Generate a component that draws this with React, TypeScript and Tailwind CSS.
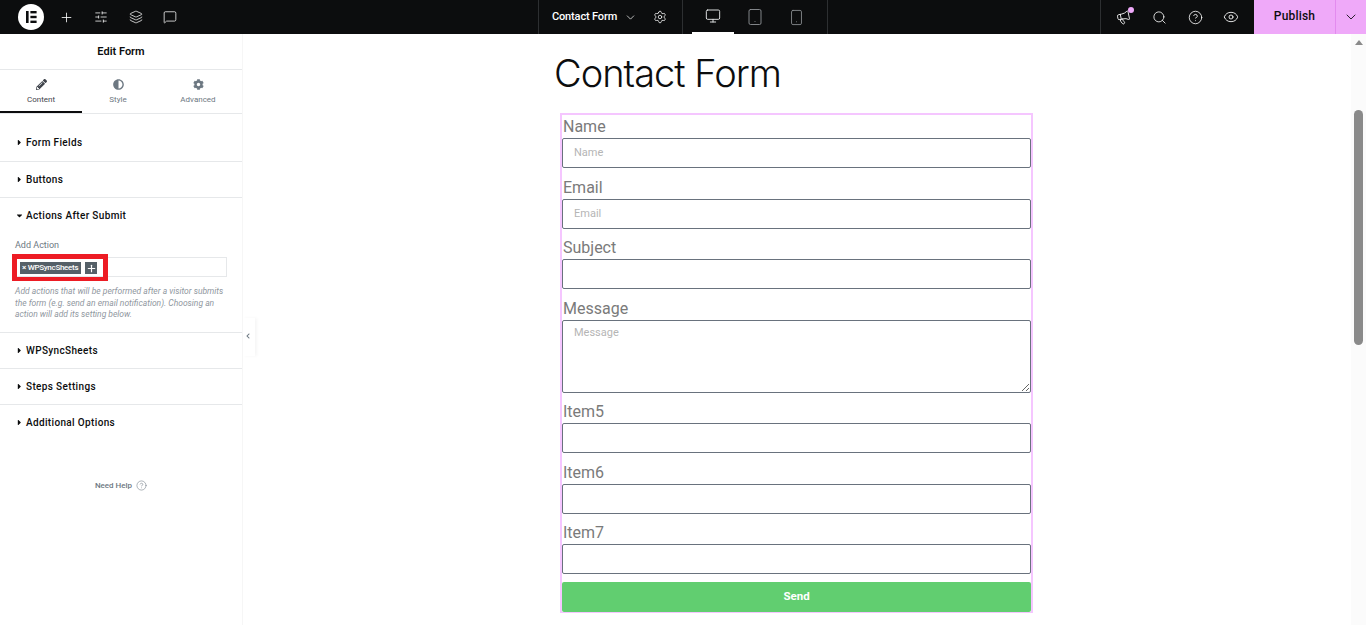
import {
  ChevronDown,
  CircleHelp,
  Eye,
  Layers,
  Megaphone,
  MessageSquare,
  Monitor,
  Plus,
  Search,
  Settings,
  SlidersHorizontal,
  Smartphone,
  Tablet,
} from 'lucide-react'
import {
  FaAdjust,
  FaCaretDown,
  FaCaretRight,
  FaChevronLeft,
  FaCog,
  FaPencilAlt,
} from 'react-icons/fa'

function ElementorLogo() {
  return (
    <div className="flex size-[26px] items-center justify-center rounded-full bg-white">
      <svg viewBox="0 0 26 26" className="size-[26px]" fill="#0c0d0e">
        <rect x="8" y="7" width="2.6" height="12" />
        <rect x="12.4" y="7" width="6.2" height="2.4" />
        <rect x="12.4" y="11.8" width="6.2" height="2.4" />
        <rect x="12.4" y="16.6" width="6.2" height="2.4" />
      </svg>
    </div>
  )
}

function TopBar() {
  return (
    <header className="flex h-[34px] shrink-0 items-stretch bg-[#0c0d0e] text-white">
      <div className="flex w-[538px] items-center pl-[18px]">
        <ElementorLogo />
        <div className="ml-[4.5px] flex">
          <span className="flex w-[35px] justify-center">
            <Plus size={15} strokeWidth={1.3} />
          </span>
          <span className="flex w-[35px] justify-center">
            <SlidersHorizontal size={14} strokeWidth={1.3} />
          </span>
          <span className="flex w-[34px] justify-center">
            <Layers size={14} strokeWidth={1.3} />
          </span>
          <span className="flex w-[35px] justify-center">
            <MessageSquare size={14} strokeWidth={1.3} />
          </span>
        </div>
      </div>

      <div className="flex w-[144px] items-center border-l border-[#2d2f31] pl-[13px]">
        <span className="text-[11px] font-medium tracking-[-0.15px] whitespace-nowrap">
          Contact Form
        </span>
        <ChevronDown size={13} strokeWidth={1.3} className="ml-[7px]" />
        <Settings size={14} strokeWidth={1.3} className="ml-[16px]" />
      </div>

      <div className="flex w-[146px] items-stretch border-x border-[#2d2f31] pl-[9px]">
        <span className="flex w-[42px] items-center justify-center border-b-2 border-white">
          <Monitor size={16} strokeWidth={1.4} className="text-[#e6e8ea]" />
        </span>
        <span className="flex w-[42px] items-center justify-center">
          <Tablet size={18} strokeWidth={1.2} className="text-[#8f9296]" />
        </span>
        <span className="flex w-[41px] items-center justify-center">
          <Smartphone size={17} strokeWidth={1.2} className="text-[#8f9296]" />
        </span>
      </div>

      <div className="flex-1" />

      <div className="flex w-[154px] items-center border-l border-[#2d2f31] pl-[5px]">
        <span className="relative flex w-[35px] justify-center">
          <Megaphone size={15} strokeWidth={1.3} className="-rotate-12" />
          <span className="absolute top-[-3px] right-[7px] size-[6px] rounded-full bg-[#efa9f9]" />
        </span>
        <span className="flex w-[36px] justify-center">
          <Search size={15} strokeWidth={1.3} />
        </span>
        <span className="flex w-[36px] justify-center">
          <CircleHelp size={15} strokeWidth={1.3} />
        </span>
        <span className="flex w-[36px] justify-center">
          <Eye size={16} strokeWidth={1.3} />
        </span>
      </div>

      <div className="flex w-[112px] bg-[#efa9f9] text-[#0c0d0e]">
        <span className="flex w-[81px] items-center justify-center pb-[2px] text-[12px] font-medium tracking-[0.2px]">
          Publish
        </span>
        <span className="flex flex-1 items-center justify-center border-l border-[#e38bef]">
          <ChevronDown size={16} strokeWidth={1.3} />
        </span>
      </div>
    </header>
  )
}

function PanelTab({
  icon,
  label,
  active,
  width,
}: {
  icon: React.ReactNode
  label: string
  active?: boolean
  width: string
}) {
  return (
    <div
      className={
        active
          ? `flex ${width} flex-col items-center gap-[5px] border-b-[2px] border-[#0c0d0e] pt-[9px] text-[#3f444b]`
          : `flex ${width} flex-col items-center gap-[5px] pt-[9px] text-[#6d7882]`
      }
    >
      {icon}
      <span className="text-[8px] leading-[10px]">{label}</span>
    </div>
  )
}

function Section({
  title,
  h = 'h-[36px]',
  bordered = true,
}: {
  title: string
  h?: string
  bordered?: boolean
}) {
  return (
    <div
      className={`flex ${h} items-center gap-[2px] pl-[15px] ${bordered ? 'border-b border-[#e6e8ea]' : ''}`}
    >
      <FaCaretRight size={9} className="text-[#0c0d0e]" />
      <span className="text-[10px] font-medium tracking-[0.35px] text-[#0c0d0e]">{title}</span>
    </div>
  )
}

function Sidebar() {
  return (
    <aside className="relative z-10 flex w-[243px] shrink-0 flex-col border-r border-[#f6f6f6] bg-white">
      <div className="flex h-[36px] items-center justify-center border-b border-[#e6e8ea] pt-[1px] text-[11px] font-semibold text-[#0c0d0e]">
        Edit Form
      </div>

      <div className="flex h-[44px] border-b border-[#e6e8ea]">
        <PanelTab active width="w-[82px]" icon={<FaPencilAlt size={11} />} label="Content" />
        <PanelTab width="w-[72px]" icon={<FaAdjust size={11} />} label="Style" />
        <PanelTab width="w-[88px]" icon={<FaCog size={11} />} label="Advanced" />
      </div>

      <Section title="Form Fields" h="h-[48px] pt-[10px]" />
      <Section title="Buttons" />

      <div className="border-b border-[#e6e8ea] pb-[11px]">
        <div className="flex h-[35px] items-center gap-[2px] pl-[15px]">
          <FaCaretDown size={9} className="text-[#0c0d0e]" />
          <span className="text-[10px] font-medium tracking-[0.35px] text-[#0c0d0e]">
            Actions After Submit
          </span>
        </div>
        <div className="mt-[6px] pl-[15px] text-[9px] leading-[12px] text-[#6d7882]">
          Add Action
        </div>
        <div className="mt-[6px] ml-[15px] flex h-[20px] w-[212px] items-center gap-[4px] border border-[#e6e8ea] pt-[2px] pl-[4px]">
          <span className="flex h-[12px] w-[61px] items-center bg-[#556068] pl-[2px] text-[8px] font-medium tracking-[-0.3px] whitespace-nowrap text-white">
            × WPSyncSheets
          </span>
          <span className="flex size-[12px] items-center justify-center bg-[#556068] text-white">
            <Plus size={11} strokeWidth={2.5} />
          </span>
        </div>
        <p className="mt-[9px] ml-[15px] w-[212px] text-[8.5px] leading-[11.5px] text-[#9097a0] italic">
          Add actions that will be performed after a visitor submits
          <br />
          the form (e.g. send an email notification). Choosing an
          <br />
          action will add its setting below.
        </p>
      </div>

      <Section title="WPSyncSheets" />
      <Section title="Steps Settings" />
      <Section title="Additional Options" bordered={false} />

      <div className="mt-[39px] flex items-center justify-center gap-[4px] text-[8px] font-medium text-[#6d7882]">
        Need Help
        <CircleHelp size={11} strokeWidth={1.2} />
      </div>

      {/* red annotation round the tag */}
      <div className="absolute top-[220px] left-[12px] h-[27px] w-[96px] border-[5px] border-b-[4px] border-[#ed1c24]" />

      <div className="absolute top-[284px] left-[243px] flex h-[38px] w-[12px] items-center justify-center bg-white pr-[2px] pb-[2px] shadow-[2px_0_3px_rgba(0,0,0,0.04)]">
        <FaChevronLeft size={6} className="text-[#6d7882]" />
      </div>
    </aside>
  )
}

function Field({
  label,
  placeholder,
  textarea,
  first,
}: {
  label: string
  placeholder?: string
  textarea?: boolean
  first?: boolean
}) {
  return (
    <div className={first ? '-mt-px flex flex-col' : 'flex flex-col'}>
      <div className="h-[24px] pl-[1px] text-[16px] leading-[26px] text-[#7a7a7a]">{label}</div>
      {textarea ? (
        <textarea
          readOnly
          placeholder={placeholder}
          className="block h-[73px] rounded-[2px] border border-[#69727d] px-[11px] py-[4px] text-[11px] outline-none placeholder:text-[#b5b5b5]"
        />
      ) : (
        <input
          readOnly
          placeholder={placeholder}
          className="h-[30px] rounded-[2px] border border-[#69727d] px-[11px] pb-[1px] text-[11px] outline-none placeholder:text-[#b5b5b5]"
        />
      )}
    </div>
  )
}

function Scrollbar() {
  return (
    <div className="flex w-[15px] shrink-0 flex-col items-center bg-[#fbfbfb]">
      <div className="mt-[6px] size-0 border-x-[4.5px] border-b-[5px] border-x-transparent border-b-[#8a8a8a]" />
      <div className="mt-[65px] h-[235px] w-[9px] rounded-[5px] bg-[#8a8a8a]" />
    </div>
  )
}

export default function App() {
  return (
    <div className="flex h-[625px] flex-col overflow-hidden bg-white font-['Roboto',sans-serif]">
      <TopBar />
      <div className="flex min-h-0 flex-1">
        <Sidebar />
        <main className="min-w-0 flex-1 pt-[12px] pl-[311px]">
          <h1 className="h-[67px] font-['Inter',sans-serif] text-[38px] leading-[54px] font-light tracking-[-1px] whitespace-nowrap text-[#0c0d0e]">
            Contact Form
          </h1>
          <form className="ml-[6px] flex w-[473px] flex-col gap-[6.5px] border-x-2 border-t-2 border-b border-[#f5c6ff]">
            <Field first label="Name" placeholder="Name" />
            <Field label="Email" placeholder="Email" />
            <Field label="Subject" />
            <Field label="Message" placeholder="Message" textarea />
            <Field label="Item5" />
            <Field label="Item6" />
            <Field label="Item7" />
            <button
              type="button"
              className="mt-[1.5px] flex h-[30px] items-center justify-center rounded-[2px] bg-[#61ce70] text-[11.5px] font-bold text-white"
            >
              Send
            </button>
          </form>
        </main>
        <Scrollbar />
      </div>
    </div>
  )
}
